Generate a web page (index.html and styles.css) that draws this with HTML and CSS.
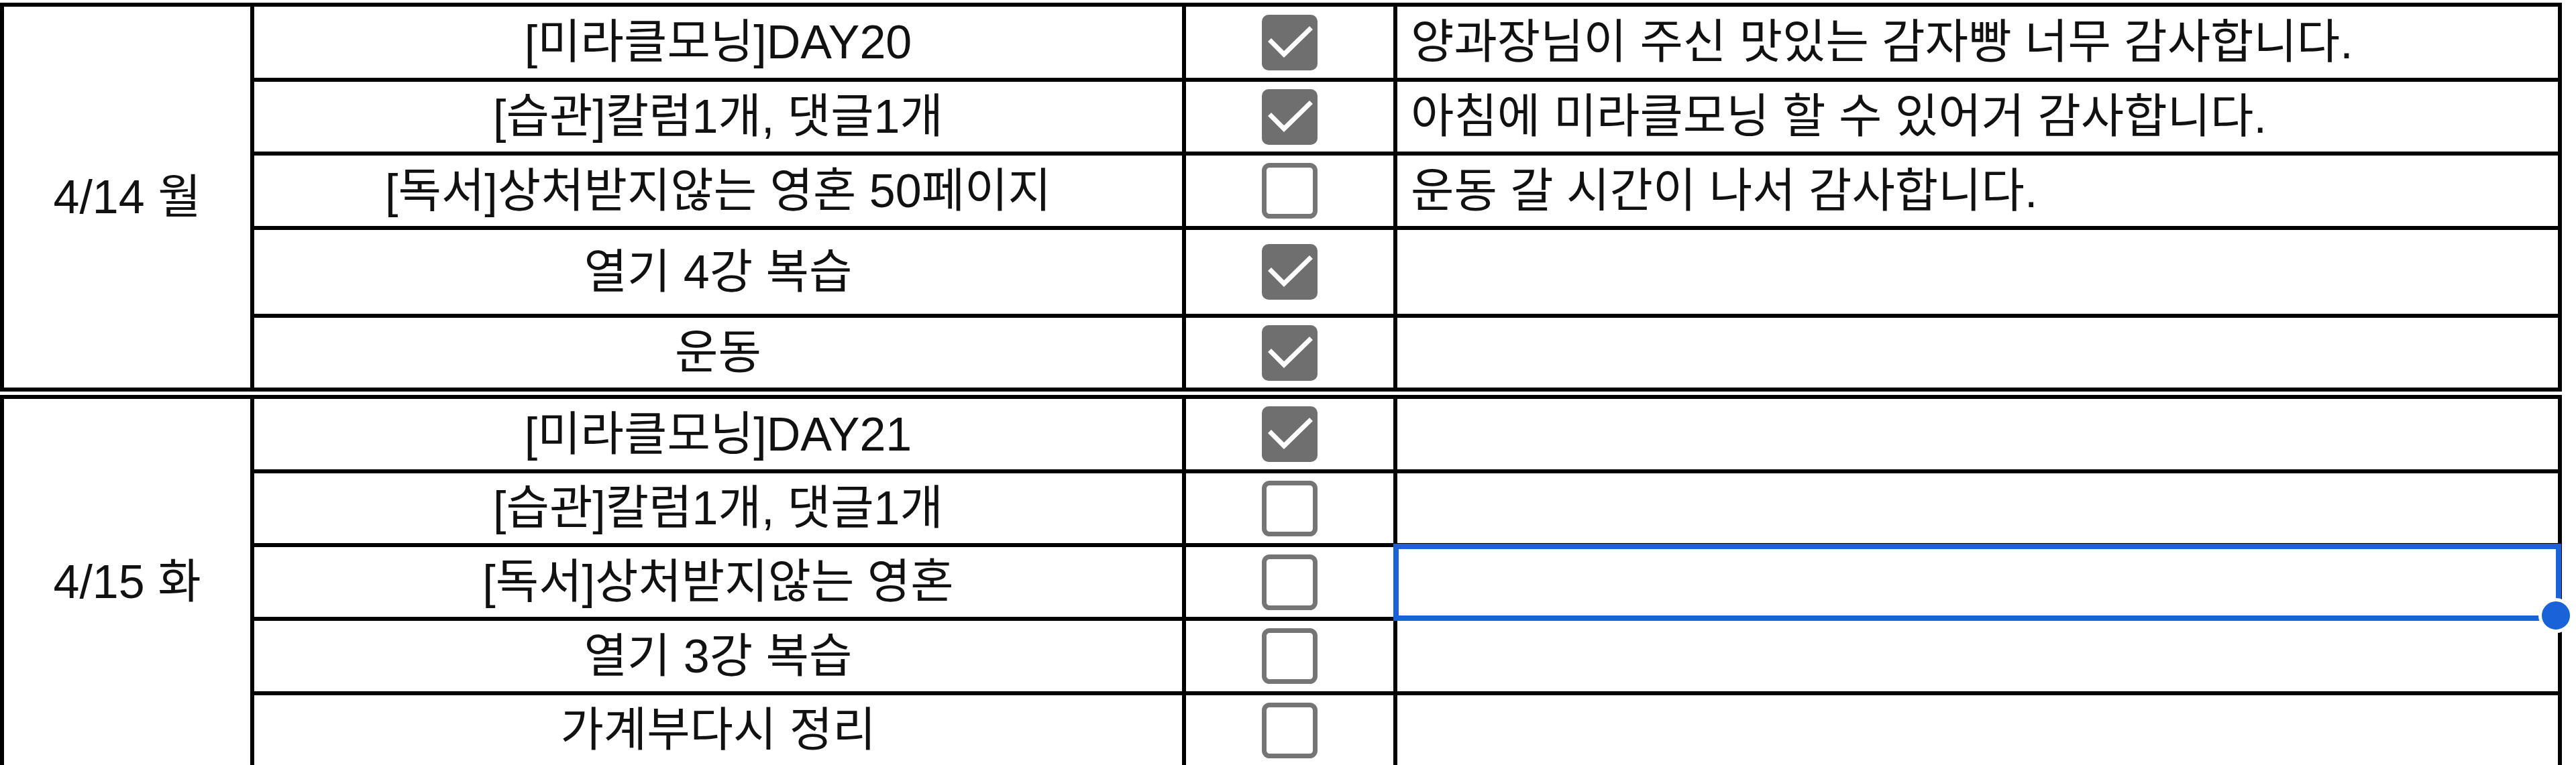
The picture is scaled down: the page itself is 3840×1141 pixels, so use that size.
FILE: index.html
```html
<!DOCTYPE html>
<html lang="ko">
<head>
<meta charset="utf-8">
<title>Habit tracker</title>
<link rel="stylesheet" href="styles.css">
</head>
<body>
<div class="sheet">
  <div class="group group-a">
    <div class="date">4/14 월</div>
    <div class="task">[미라클모닝]DAY20</div>
    <div class="check"><svg class="box" viewBox="0 0 83 83"><rect class="on" x="0" y="0" width="83" height="83" rx="10"/><polyline class="mark" points="14,40 33,59 71,22"/></svg></div>
    <div class="note">양과장님이 주신 맛있는 감자빵 너무 감사합니다.</div>

    <div class="task">[습관]칼럼1개, 댓글1개</div>
    <div class="check"><svg class="box" viewBox="0 0 83 83"><rect class="on" x="0" y="0" width="83" height="83" rx="10"/><polyline class="mark" points="14,40 33,59 71,22"/></svg></div>
    <div class="note">아침에 미라클모닝 할 수 있어거 감사합니다.</div>

    <div class="task">[독서]상처받지않는 영혼 50페이지</div>
    <div class="check"><svg class="box" viewBox="0 0 83 83"><rect class="off" x="3.5" y="3.5" width="76" height="76" rx="8"/></svg></div>
    <div class="note">운동 갈 시간이 나서 감사합니다.</div>

    <div class="task">열기 4강 복습</div>
    <div class="check"><svg class="box" viewBox="0 0 83 83"><rect class="on" x="0" y="0" width="83" height="83" rx="10"/><polyline class="mark" points="14,40 33,59 71,22"/></svg></div>
    <div class="note"></div>

    <div class="task">운동</div>
    <div class="check"><svg class="box" viewBox="0 0 83 83"><rect class="on" x="0" y="0" width="83" height="83" rx="10"/><polyline class="mark" points="14,40 33,59 71,22"/></svg></div>
    <div class="note"></div>
  </div>

  <div class="group group-b">
    <div class="date">4/15 화</div>
    <div class="task">[미라클모닝]DAY21</div>
    <div class="check"><svg class="box" viewBox="0 0 83 83"><rect class="on" x="0" y="0" width="83" height="83" rx="10"/><polyline class="mark" points="14,40 33,59 71,22"/></svg></div>
    <div class="note"></div>

    <div class="task">[습관]칼럼1개, 댓글1개</div>
    <div class="check"><svg class="box" viewBox="0 0 83 83"><rect class="off" x="3.5" y="3.5" width="76" height="76" rx="8"/></svg></div>
    <div class="note"></div>

    <div class="task">[독서]상처받지않는 영혼</div>
    <div class="check"><svg class="box" viewBox="0 0 83 83"><rect class="off" x="3.5" y="3.5" width="76" height="76" rx="8"/></svg></div>
    <div class="note selected"><div class="selection"><span class="handle"></span></div></div>

    <div class="task">열기 3강 복습</div>
    <div class="check"><svg class="box" viewBox="0 0 83 83"><rect class="off" x="3.5" y="3.5" width="76" height="76" rx="8"/></svg></div>
    <div class="note"></div>

    <div class="task">가계부다시 정리</div>
    <div class="check"><svg class="box" viewBox="0 0 83 83"><rect class="off" x="3.5" y="3.5" width="76" height="76" rx="8"/></svg></div>
    <div class="note"></div>
  </div>
</div>
</body>
</html>
```

FILE: styles.css
```css
html, body {
  margin: 0;
  padding: 0;
  background: #ffffff;
  overflow: hidden;
}

body {
  font-family: "Liberation Sans", "Noto Sans CJK KR", sans-serif;
  font-size: 70px;
  color: #111111;
}

.sheet {
  display: flex;
  flex-direction: column;
  gap: 5px;
  padding-top: 4px;
}

.group {
  display: grid;
  grid-template-columns: 367px 1383px 309px 1730px;
  gap: 6px;
  padding: 6px;
  background: #000000;
  width: max-content;
}

.group-a {
  grid-template-rows: 106px 104px 105px 125px 104px;
}

.group-b {
  grid-template-rows: 105px 104px 104px 105px 104px;
}

.group > div {
  background: #ffffff;
  display: flex;
  align-items: center;
  white-space: nowrap;
  line-height: 1;
}

.date {
  grid-column: 1;
  grid-row: 1 / span 5;
  justify-content: center;
}

.task {
  justify-content: center;
}

.check {
  justify-content: center;
}

.note {
  padding-left: 20px;
}

.box {
  width: 83px;
  height: 83px;
  display: block;
}

.box .on {
  fill: #6f6f6f;
}

.box .off {
  fill: #ffffff;
  stroke: #757575;
  stroke-width: 7;
}

.box .mark {
  fill: none;
  stroke: #ffffff;
  stroke-width: 7;
  stroke-linecap: square;
  stroke-linejoin: miter;
}

.selected {
  position: relative;
}

.selection {
  position: absolute;
  top: -5px;
  left: -6px;
  right: -5px;
  bottom: -6px;
  border: 8px solid #1a62d8;
}

.handle {
  position: absolute;
  right: -26px;
  bottom: -26px;
  width: 42px;
  height: 42px;
  border-radius: 50%;
  background: #1a62d8;
  border: 5px solid #ffffff;
}
```
